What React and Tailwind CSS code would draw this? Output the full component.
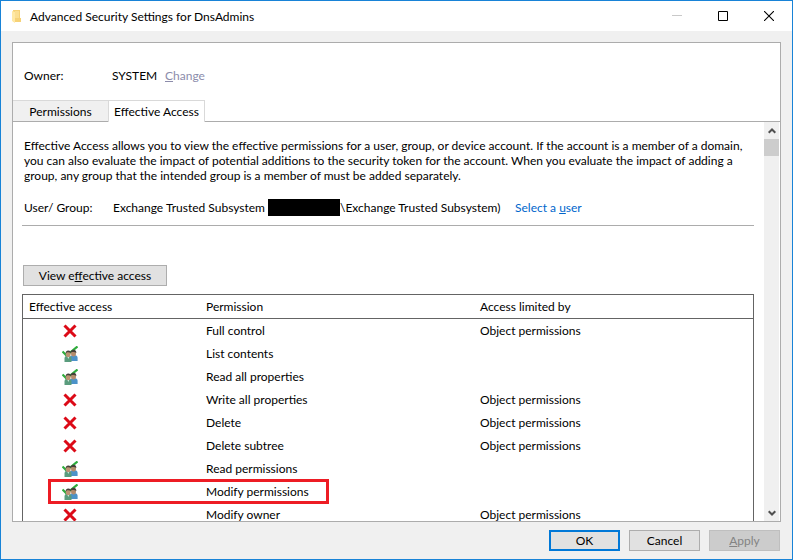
import React from "react";

const rows = [
  { name: "Full control", allowed: false },
  { name: "List contents", allowed: true },
  { name: "Read all properties", allowed: true },
  { name: "Write all properties", allowed: false },
  { name: "Delete", allowed: false },
  { name: "Delete subtree", allowed: false },
  { name: "Read permissions", allowed: true },
  { name: "Modify permissions", allowed: true, highlighted: true },
  { name: "Modify owner", allowed: false },
];

function FolderIcon() {
  return (
    <svg width="10" height="13" viewBox="0 0 10 13" aria-hidden="true">
      <path d="M1 0h7v8h1v4H1z" fill="#f6d277" />
      <path d="M0 1l3 1v11l-3-2z" fill="#ffe9a6" />
      <path d="M3 1h4v7H3z" fill="#fbdf92" />
    </svg>
  );
}

function DeniedIcon() {
  return (
    <svg width="16" height="16" viewBox="0 0 16 16" role="img" aria-label="Denied">
      <path d="M2.5 2.5L13.5 13.5M13.5 2.5L2.5 13.5" stroke="#dc0a17" strokeWidth="3" />
    </svg>
  );
}

function AllowedIcon() {
  return (
    <svg width="16" height="16" viewBox="0 0 16 16" role="img" aria-label="Allowed">
      <path d="M0.5 5.5L4.5 9.5L15.5 0.5" fill="none" stroke="#2eac3c" strokeWidth="2.2" />
      <path d="M8 15v-3q0-3 3.8-3t3.8 3v3z" fill="#4c93c9" />
      <path d="M2.5 16v-3.5q0-3 3.5-3t3.5 3V16z" fill="#5a9c7d" />
      <path d="M5 10h2.5L6.400 13z" fill="#d5e6dc" />
      <ellipse cx="11.500" cy="7.500" rx="2.500" ry="3" fill="#b48c6c" />
      <path d="M8.800 6.500q0-2.700 2.700-2.700t2.900 3.200q-2-1.500-4-1z" fill="#45413a" />
      <ellipse cx="6.200" cy="8.200" rx="2.400" ry="2.900" fill="#bd9373" />
      <path d="M3.500 8q0-3.500 2.800-3.500T9 7q-2-1.200-4-0.700z" fill="#45413a" />
    </svg>
  );
}

function Chevron({ up }) {
  return (
    <svg width="8" height="6" viewBox="0 0 8 6" aria-hidden="true">
      <path
        d={up ? "M0.700 4.800L4 1.500L7.300 4.800" : "M0.700 1.200L4 4.500L7.300 1.200"}
        fill="none"
        stroke="#505050"
        strokeWidth="2"
      />
    </svg>
  );
}

function TitleBar() {
  return (
    <header className="flex h-[30px] shrink-0 items-center bg-white pl-[11px]">
      <FolderIcon />
      <h1 className="ml-2 flex-1">Advanced Security Settings for DnsAdmins</h1>
      <button className="flex h-full w-[46px] items-center justify-center" aria-label="Minimize" disabled>
        <svg width="10" height="10" viewBox="0 0 10 10">
          <path d="M0 4.500h10" stroke="#c9c9c9" />
        </svg>
      </button>
      <button className="flex h-full w-[46px] items-center justify-center" aria-label="Maximize">
        <svg width="10" height="10" viewBox="0 0 10 10">
          <path d="M0.500 0.500h9v9h-9z" fill="none" stroke="#000" />
        </svg>
      </button>
      <button className="flex h-full w-[46px] items-center justify-center" aria-label="Close">
        <svg width="10" height="10" viewBox="0 0 10 10">
          <path d="M0 0L10 10M10 0L0 10" stroke="#000" strokeWidth="1.100" />
        </svg>
      </button>
    </header>
  );
}

function AccessTable() {
  return (
    <table className="mt-2 w-full table-fixed border-separate border-spacing-0 border border-[#646464] text-left">
      <thead>
        <tr className="h-6">
          <th className="w-[177px] border-b border-[#646464] pl-1.5 font-normal">Effective access</th>
          <th className="w-[274px] border-b border-[#646464] pl-1.5 font-normal">Permission</th>
          <th className="border-b border-[#646464] pl-1.5 font-normal">Access limited by</th>
        </tr>
      </thead>
      <tbody>
        {rows.map((row) => (
          <tr key={row.name} className="relative h-[23px]">
            <td className="pl-[39px]">
              {row.allowed ? <AllowedIcon /> : <DeniedIcon />}
              {row.highlighted && (
                <div className="pointer-events-none absolute -inset-y-px left-[25px] w-[281px] border-3 border-[#ed1c24]" />
              )}
            </td>
            <td className="pl-1.5">{row.name}</td>
            <td className="pl-1.5">{row.allowed ? "" : "Object permissions"}</td>
          </tr>
        ))}
      </tbody>
    </table>
  );
}

export default function App() {
  return (
    <div className="flex h-screen flex-col overflow-hidden border border-[#1883d7] bg-[#f0f0f0] font-[Lato,sans-serif] text-[12px] leading-[15px] text-black">
      <TitleBar />
      <main className="mx-[11px] mt-[11px] flex min-h-0 flex-1 flex-col border border-[#acacac] bg-white">
        <div className="flex h-[57px] shrink-0 items-center pt-2 pl-[11px]">
          <span className="w-[88px]">Owner:</span>
          <span className="w-[53px]">SYSTEM</span>
          <a href="#change" className="text-[#8c8cab]">
            <span className="underline">C</span>hange
          </a>
        </div>
        <div className="flex h-[22px] shrink-0" role="tablist">
          <button role="tab" aria-selected="false" className="w-[95px] border-t border-b border-t-[#d9d9d9] border-b-[#acacac] bg-[#f0f0f0]">
            Permissions
          </button>
          <button role="tab" aria-selected="true" className="w-[97px] border-t border-r border-l border-[#d9d9d9] bg-white">
            Effective Access
          </button>
          <div className="flex-1 border-b border-[#acacac]" />
        </div>
        <div className="flex min-h-0 flex-1 pr-px">
          <section className="min-w-0 flex-1 overflow-hidden pt-4 pr-[10px] pl-[9px]">
            <p className="pl-0.5">
              Effective Access allows you to view the effective permissions for a user, group, or device account. If the
              account is a member of a domain, you can also evaluate the impact of potential additions to the security
              token for the account. When you evaluate the impact of adding a group, any group that the intended group
              is a member of must be added separately.
            </p>
            <div className="mt-4 flex h-[17px] items-center pl-0.5 whitespace-nowrap">
              <span className="w-[89px]">User/ Group:</span>
              <span className="w-[155px]">Exchange Trusted Subsystem</span>
              <span className="h-[17px] w-[72px] bg-black" />
              <span className="w-[175px]">\Exchange Trusted Subsystem)</span>
              <a href="#select-user" className="text-[#0066cc]">
                Select a <span className="underline">u</span>ser
              </a>
            </div>
            <hr className="mt-[9px] border-[#acacac]" />
            <button className="mt-[39px] ml-px block h-[21px] w-36 border border-[#adadad] bg-[#e1e1e1]">
              View e<span className="underline">f</span>fective access
            </button>
            <AccessTable />
          </section>
          <div className="flex w-[15px] shrink-0 flex-col items-center bg-[#f0f0f0]">
            <button className="flex h-[17px] w-full items-center justify-center" aria-label="Scroll up">
              <Chevron up />
            </button>
            <div className="h-[17px] w-full bg-[#cdcdcd]" />
            <button className="mt-auto flex h-[17px] w-full items-center justify-center" aria-label="Scroll down">
              <Chevron />
            </button>
          </div>
        </div>
      </main>
      <footer className="flex h-[37px] shrink-0 justify-end gap-[9px] pt-2 pr-3">
        <button className="h-[21px] w-[71px] border-2 border-[#0078d7] bg-[#e1e1e1]">OK</button>
        <button className="h-[21px] w-[71px] border border-[#adadad] bg-[#e1e1e1]">Cancel</button>
        <button className="h-[21px] w-[71px] border border-[#bfbfbf] bg-[#cccccc] text-[#838383]" disabled>
          <span className="underline">A</span>pply
        </button>
      </footer>
    </div>
  );
}
